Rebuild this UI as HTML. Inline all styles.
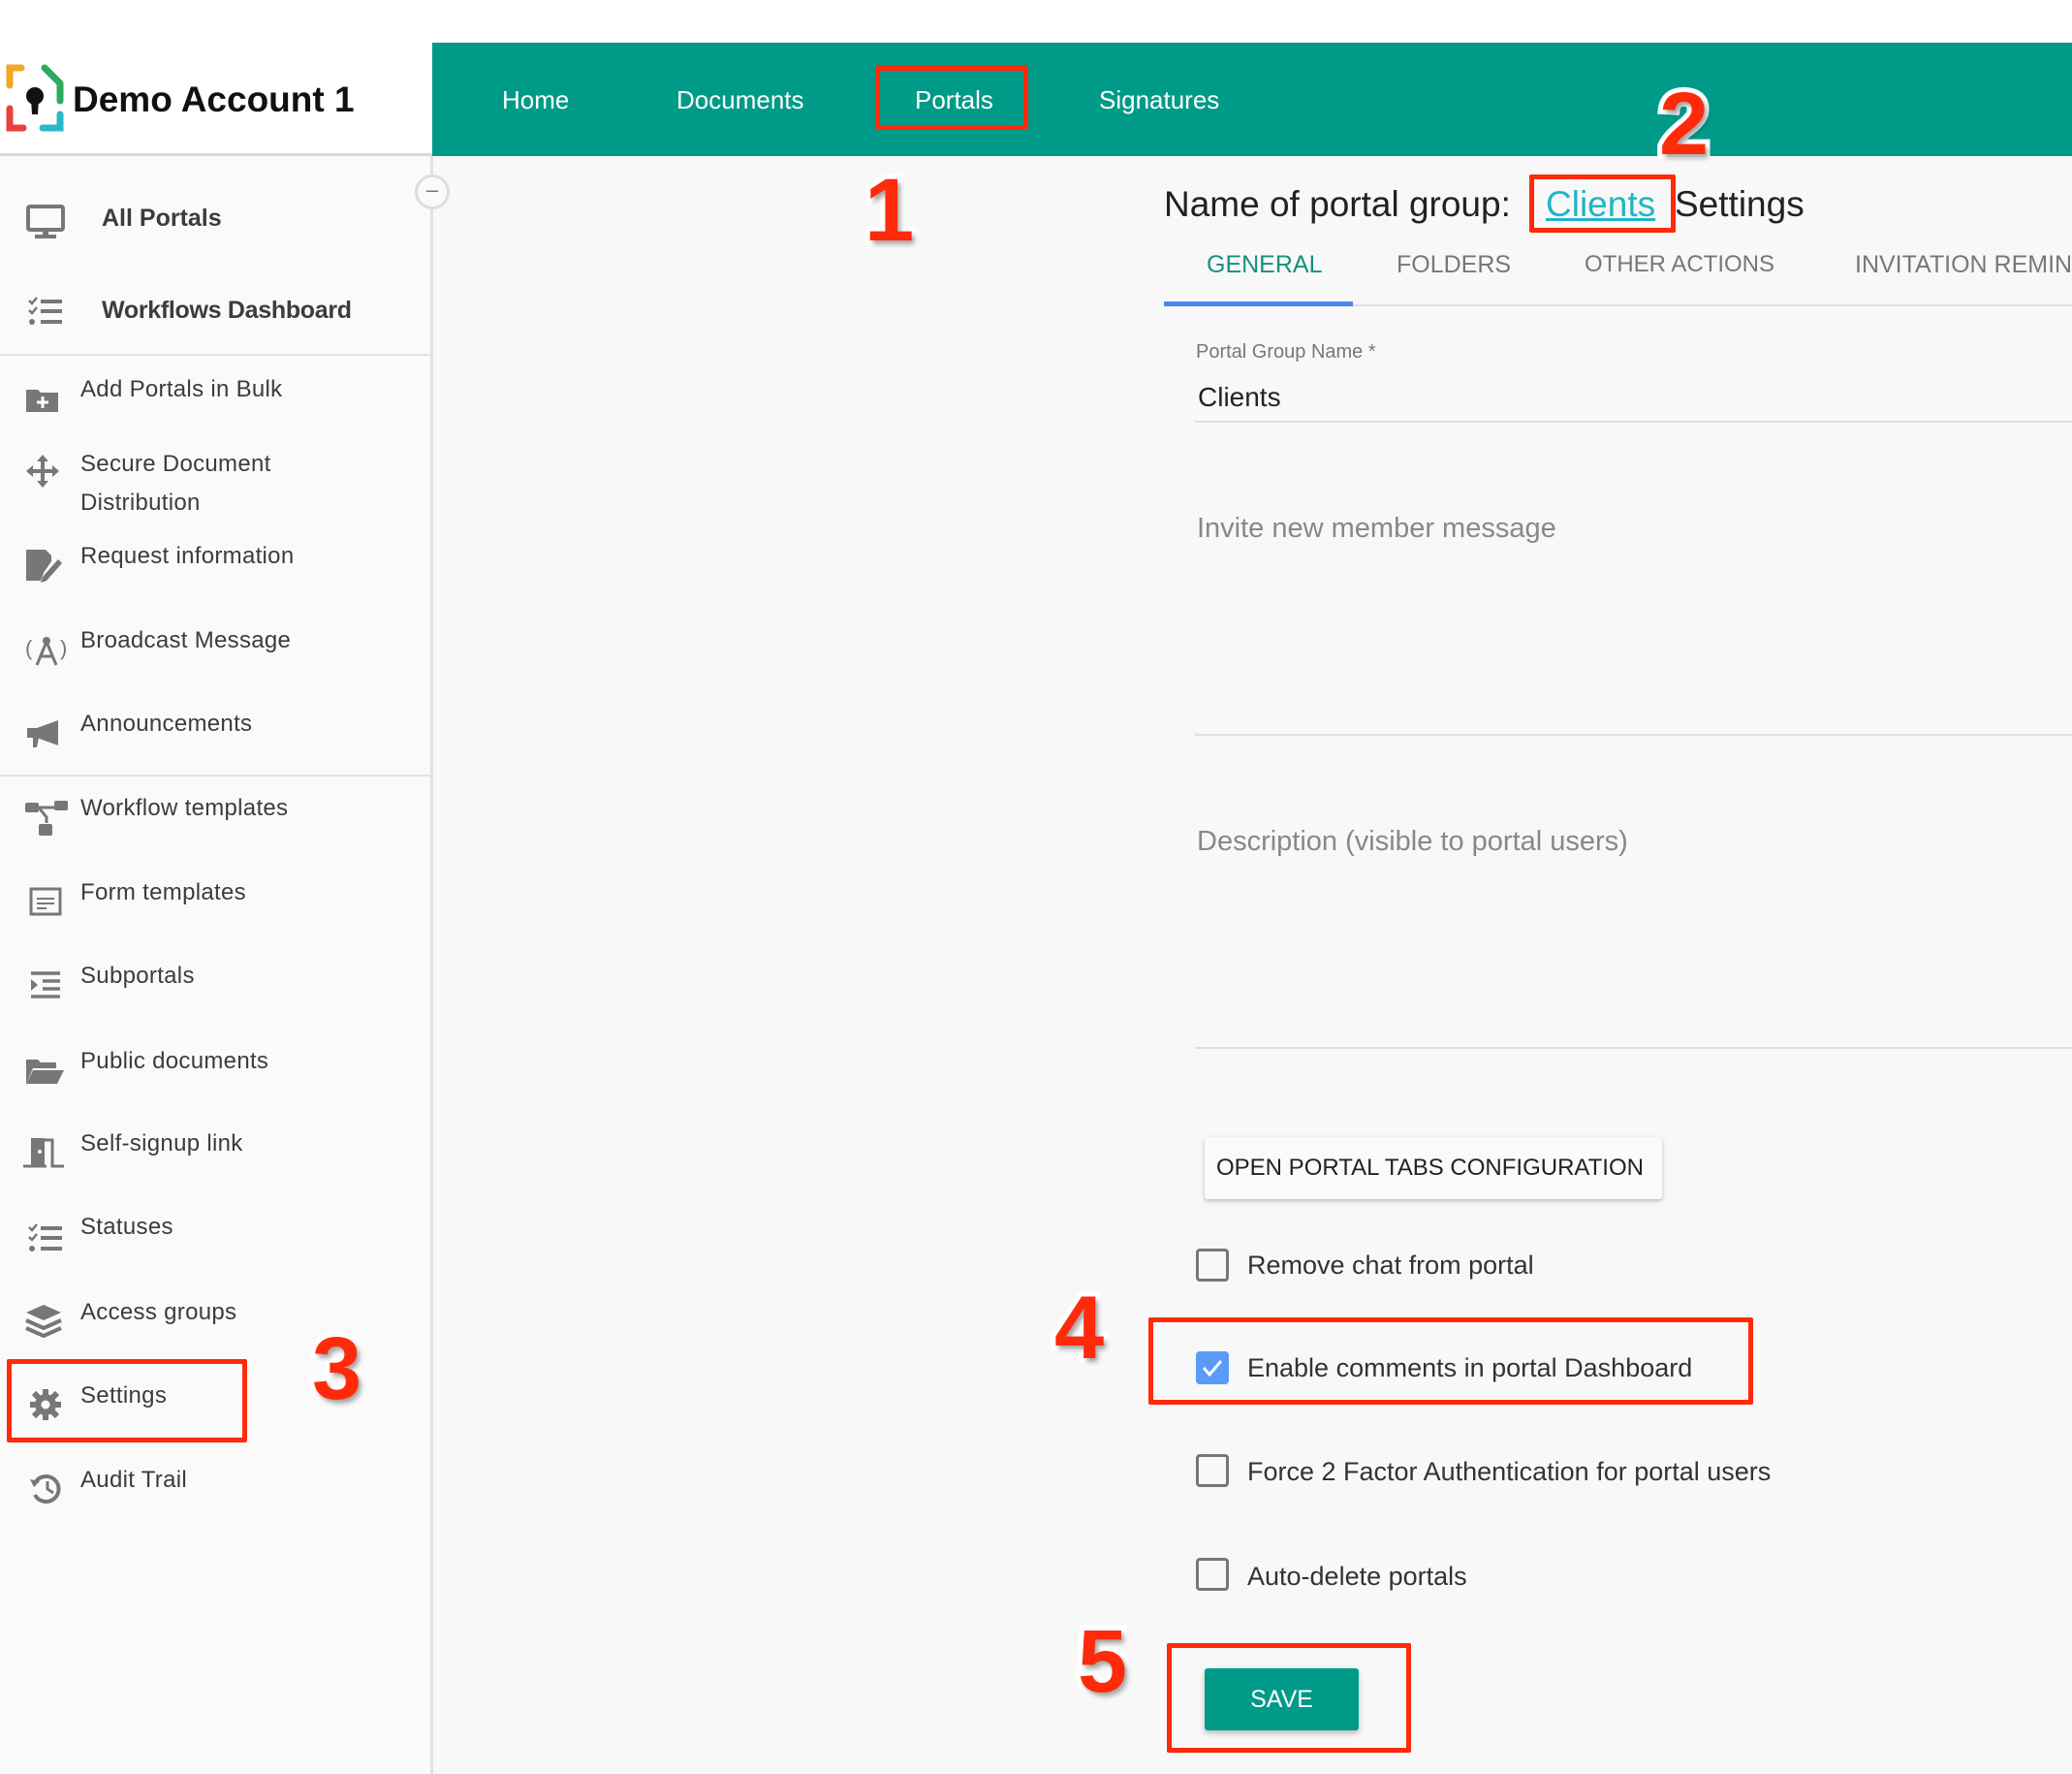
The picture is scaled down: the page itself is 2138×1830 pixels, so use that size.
<!DOCTYPE html>
<html><head><meta charset="utf-8"><style>
*{margin:0;padding:0;box-sizing:border-box}
body{width:2138px;height:1830px;background:#f8f8f8;font-family:"Liberation Sans",sans-serif;position:relative;overflow:hidden;color:#333}
.a{position:absolute;white-space:nowrap}
.side{position:absolute;left:0;top:161px;width:447px;height:1669px;background:#fafafa;border-right:3px solid #e2e2e2}
.si{position:absolute;left:83px;font-size:24px;color:#3c3c3c;letter-spacing:.3px}
.ic{position:absolute;left:26px}
.red{position:absolute;border:5px solid #ff2a0a;border-radius:2px}
.num{position:absolute;font-weight:bold;color:#ff2a0a;font-size:92px;-webkit-text-stroke:10px #fff;paint-order:stroke fill;text-shadow:3px 4px 5px rgba(0,0,0,.35);font-family:"Liberation Sans",sans-serif}
.cb{position:absolute;left:1234px;width:34px;height:34px;border:3px solid #777;border-radius:4px}
.cl{position:absolute;left:1287px;font-size:27px;color:#333}
.line{position:absolute;left:1233px;right:0;height:2px;background:#e0e0e0}
</style></head><body>
<div class="a" style="left:0;top:0;width:2138px;height:44px;background:#fff"></div>
<div class="a" style="left:0;top:44px;width:446px;height:117px;background:#fff;border-bottom:3px solid #d9d9d9"></div>
<div class="a" style="left:446px;top:44px;width:1692px;height:117px;background:#009a88"></div>
<svg class="a" style="left:4px;top:66px" width="62" height="72" viewBox="0 0 62 72">
<path d="M18 4H6v18" fill="none" stroke="#f5a623" stroke-width="7" stroke-linecap="round"/>
<path d="M42 4l16 16v18" fill="none" stroke="#2eaa5c" stroke-width="7" stroke-linecap="round" stroke-linejoin="round"/>
<path d="M6 46v20h14" fill="none" stroke="#e94040" stroke-width="7" stroke-linecap="round"/>
<path d="M40 66h18V52" fill="none" stroke="#2bb7c8" stroke-width="7" stroke-linecap="round"/>
<circle cx="32" cy="33" r="9" fill="#111"/><path d="M28 36h8l-1 16h-6z" fill="#111"/>
</svg>
<div class="a" style="left:75px;top:82px;font-size:37px;font-weight:bold;color:#111">Demo Account 1</div>
<div class="a" style="left:518px;top:88px;font-size:26px;color:#fff">Home</div>
<div class="a" style="left:698px;top:88px;font-size:26px;color:#fff">Documents</div>
<div class="a" style="left:944px;top:88px;font-size:26px;color:#fff">Portals</div>
<div class="a" style="left:1134px;top:88px;font-size:26px;color:#fff">Signatures</div>
<div class="red" style="left:903px;top:68px;width:158px;height:66px"></div>

<div class="side"></div>
<div class="a" style="left:428px;top:180px;width:36px;height:36px;border-radius:50%;border:3px solid #ddd;background:#fafafa;text-align:center;line-height:26px;font-size:22px;color:#777">–</div>
<svg class="ic" style="left:27px;top:211px" width="40" height="36"><rect x="2" y="2" width="36" height="24" rx="2" fill="none" stroke="#777" stroke-width="4"/><rect x="17" y="26" width="6" height="6" fill="#777"/><rect x="9" y="31" width="22" height="4" fill="#777"/></svg>
<div class="si" style="left:105px;top:211px;font-weight:bold;font-size:25px;letter-spacing:0">All Portals</div>
<svg class="ic" style="left:28px;top:306px" width="38" height="30"><path d="M2 4l3 3 5-6M2 14l3 3 5-6" stroke="#777" stroke-width="2.5" fill="none"/><circle cx="5" cy="26" r="3" fill="#777"/><rect x="14" y="3" width="22" height="4" fill="#777"/><rect x="14" y="13" width="22" height="4" fill="#777"/><rect x="14" y="24" width="22" height="4" fill="#777"/></svg>
<div class="si" style="left:105px;top:306px;font-weight:bold;font-size:25px;letter-spacing:-.3px">Workflows Dashboard</div>
<div class="a" style="left:0;top:365px;width:447px;height:2px;background:#e3e3e3"></div>

<svg class="ic" style="top:398px" width="36" height="28"><path d="M1 4h12l3 3h18v20H1z" fill="#777"/><path d="M18 11v12M12 17h12" stroke="#fff" stroke-width="3"/></svg>
<div class="si" style="top:388px">Add Portals in Bulk</div>
<svg class="ic" style="top:468px" width="36" height="36"><path d="M18 1l6 7h-4v8h8v-4l7 6-7 6v-4h-8v8h4l-6 7-6-7h4v-8H8v4l-7-6 7-6v4h8V8h-4z" fill="#777"/></svg>
<div class="si" style="top:459px;line-height:40px">Secure Document<br>Distribution</div>
<svg class="ic" style="top:565px" width="40" height="36"><path d="M1 2h20l6 6v6l-8 12-3 8H1z" fill="#777"/><path d="M18 30l16-18 4 4-16 18-6 2z" fill="#777"/></svg>
<div class="si" style="top:560px">Request information</div>
<svg class="ic" style="top:652px" width="44" height="36"><text x="0" y="24" font-size="22" fill="#777" font-family="Liberation Sans">(</text><text x="36" y="24" font-size="22" fill="#777" font-family="Liberation Sans">)</text><path d="M22 10l-10 24M22 10l10 24M16 25h12" stroke="#777" stroke-width="3" fill="none"/><circle cx="22" cy="9" r="4" fill="#777"/></svg>
<div class="si" style="top:647px">Broadcast Message</div>
<svg class="ic" style="top:741px" width="40" height="32"><path d="M2 10h10l22-8v26l-22-8H2z" fill="#777"/><path d="M8 20h6l-2 10H8z" fill="#777"/></svg>
<div class="si" style="top:733px">Announcements</div>
<div class="a" style="left:0;top:799px;width:447px;height:2px;background:#e3e3e3"></div>

<svg class="ic" style="top:826px" width="44" height="38"><rect x="0" y="2" width="14" height="10" rx="2" fill="#777"/><rect x="30" y="0" width="14" height="10" rx="2" fill="#777"/><path d="M14 7h16M14 7l8 10v6" stroke="#777" stroke-width="3" fill="none"/><rect x="14" y="24" width="14" height="12" rx="2" fill="#777"/></svg>
<div class="si" style="top:820px">Workflow templates</div>
<svg class="ic" style="left:30px;top:915px" width="34" height="30"><rect x="2" y="2" width="30" height="26" fill="none" stroke="#777" stroke-width="3"/><path d="M8 12h18M8 17h18M8 22h10" stroke="#777" stroke-width="2"/></svg>
<div class="si" style="top:907px">Form templates</div>
<svg class="ic" style="left:30px;top:1002px" width="34" height="28"><path d="M2 2h30M14 10h18M14 18h18M2 26h30" stroke="#777" stroke-width="3.5"/><path d="M2 8l7 6-7 6z" fill="#777"/></svg>
<div class="si" style="top:993px">Subportals</div>
<svg class="ic" style="top:1090px" width="40" height="30"><path d="M1 3h12l3 3h16v6H8L1 28z" fill="#777"/><path d="M8 14h32l-7 14H1z" fill="#777"/></svg>
<div class="si" style="top:1081px">Public documents</div>
<svg class="ic" style="left:24px;top:1170px" width="44" height="36"><path d="M8 4h14v28H8z" fill="#777"/><path d="M0 33h24M22 6h8v27h12" stroke="#777" stroke-width="3" fill="none"/><circle cx="17" cy="18" r="2" fill="#fff"/></svg>
<div class="si" style="top:1166px">Self-signup link</div>
<svg class="ic" style="left:28px;top:1262px" width="38" height="30"><path d="M2 4l3 3 5-6M2 14l3 3 5-6" stroke="#777" stroke-width="2.5" fill="none"/><circle cx="5" cy="26" r="3" fill="#777"/><rect x="14" y="3" width="22" height="4" fill="#777"/><rect x="14" y="13" width="22" height="4" fill="#777"/><rect x="14" y="24" width="22" height="4" fill="#777"/></svg>
<div class="si" style="top:1252px">Statuses</div>
<svg class="ic" style="top:1345px" width="38" height="36"><path d="M19 1l18 8-18 8L1 9z" fill="#777"/><path d="M1 17l18 8 18-8M1 25l18 8 18-8" stroke="#777" stroke-width="4" fill="none"/></svg>
<div class="si" style="top:1340px">Access groups</div>
<svg class="ic" style="left:30px;top:1432px" width="34" height="34"><circle cx="17" cy="17" r="11" fill="#777"/><path d="M17 1v32M1 17h32M5 5l24 24M29 5L5 29" stroke="#777" stroke-width="6"/><circle cx="17" cy="17" r="4.5" fill="#fafafa"/></svg>
<div class="si" style="top:1426px">Settings</div>
<div class="red" style="left:7px;top:1402px;width:248px;height:86px"></div>
<svg class="ic" style="left:30px;top:1518px" width="36" height="34"><path d="M6 12A13 13 0 1 1 6 24" stroke="#777" stroke-width="4" fill="none"/><path d="M1 8l10 2-6 6z" fill="#777"/><path d="M19 10v8l6 4" stroke="#777" stroke-width="3" fill="none"/></svg>
<div class="si" style="top:1513px">Audit Trail</div>

<div class="num" style="left:322px;top:1360px">3</div>
<div class="num" style="left:892px;top:165px">1</div>
<div class="num" style="left:1712px;top:76px">2</div>
<div class="num" style="left:1088px;top:1318px">4</div>
<div class="num" style="left:1112px;top:1662px">5</div>

<div class="a" style="left:1201px;top:190px;font-size:37px;color:#222">Name of portal group:</div>
<div class="a" style="left:1595px;top:190px;font-size:37px;color:#1fb5c6;text-decoration:underline;text-decoration-thickness:3px">Clients</div>
<div class="a" style="left:1728px;top:190px;font-size:37px;color:#222">Settings</div>
<div class="red" style="left:1578px;top:180px;width:151px;height:60px"></div>
<div class="a" style="left:1201px;top:314px;width:937px;height:2px;background:#e0e0e0"></div>
<div class="a" style="left:1201px;top:311px;width:195px;height:5px;background:#4a86e8"></div>
<div class="a" style="left:1245px;top:259px;font-size:25px;color:#16917f">GENERAL</div>
<div class="a" style="left:1441px;top:259px;font-size:25px;color:#777">FOLDERS</div>
<div class="a" style="left:1635px;top:259px;font-size:24px;color:#777">OTHER ACTIONS</div>
<div class="a" style="left:1914px;top:259px;font-size:25px;color:#777">INVITATION REMIN</div>

<div class="a" style="left:1234px;top:352px;font-size:20px;color:#777">Portal Group Name *</div>
<div class="a" style="left:1236px;top:394px;font-size:28px;color:#222">Clients</div>
<div class="line" style="top:434px"></div>
<div class="a" style="left:1235px;top:529px;font-size:29px;color:#888">Invite new member message</div>
<div class="line" style="top:757px"></div>
<div class="a" style="left:1235px;top:852px;font-size:29px;color:#888">Description (visible to portal users)</div>
<div class="line" style="top:1080px"></div>

<div class="a" style="left:1243px;top:1173px;width:472px;height:64px;background:#fafafa;box-shadow:0 2px 5px rgba(0,0,0,.25);border-radius:3px;font-size:24px;color:#222;line-height:64px;padding-left:12px">OPEN PORTAL TABS CONFIGURATION</div>

<div class="cb" style="top:1288px"></div>
<div class="cl" style="top:1290px">Remove chat from portal</div>
<div class="cb" style="top:1394px;background:#5b9bf8;border-color:#5b9bf8"><svg width="28" height="28" style="position:absolute;left:0;top:0"><path d="M5 14l6 7 12-14" stroke="#fff" stroke-width="3" fill="none"/></svg></div>
<div class="cl" style="top:1396px">Enable comments in portal Dashboard</div>
<div class="red" style="left:1185px;top:1359px;width:624px;height:90px"></div>
<div class="cb" style="top:1500px"></div>
<div class="cl" style="top:1503px">Force 2 Factor Authentication for portal users</div>
<div class="cb" style="top:1607px"></div>
<div class="cl" style="top:1611px">Auto-delete portals</div>

<div class="a" style="left:1243px;top:1721px;width:159px;height:64px;background:#009a88;border-radius:3px;box-shadow:0 3px 6px rgba(0,0,0,.25);color:#fff;font-size:25px;line-height:64px;text-align:center">SAVE</div>
<div class="red" style="left:1204px;top:1695px;width:252px;height:113px"></div>
</body></html>
